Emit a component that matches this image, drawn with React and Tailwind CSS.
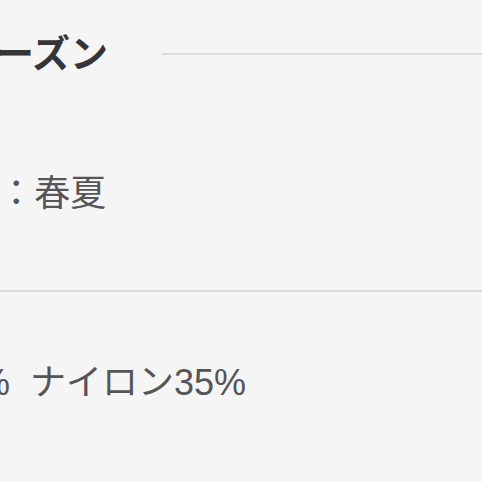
import React from "react";

const App = () => {
  return (
    <div
      className="w-[482px] h-[482px] overflow-hidden bg-[#f5f5f6]"
      style={{ fontFamily: '"Liberation Sans", "Noto Sans CJK JP", sans-serif' }}
    >
      <div className="pt-[30px] flex items-center">
        <h2 className="ml-[-42px] text-[38px] leading-[48px] font-bold text-[#353539] whitespace-nowrap">
          シーズン
        </h2>
        <div className="ml-[54px] flex-1 h-[2px] bg-[#dddddd]" />
      </div>

      <p className="mt-[92px] ml-[-144px] text-[36px] leading-[48px] text-[#555558] whitespace-nowrap">
        シーズン：春夏
      </p>

      <div className="mt-[72px] h-[2px] bg-[#dcdcdc]" />

      <p className="mt-[67px] ml-[-62px] text-[36px] leading-[48px] text-[#555558] whitespace-nowrap">
        65%&nbsp;&nbsp;ナイロン35%
      </p>
    </div>
  );
};

export default App;
